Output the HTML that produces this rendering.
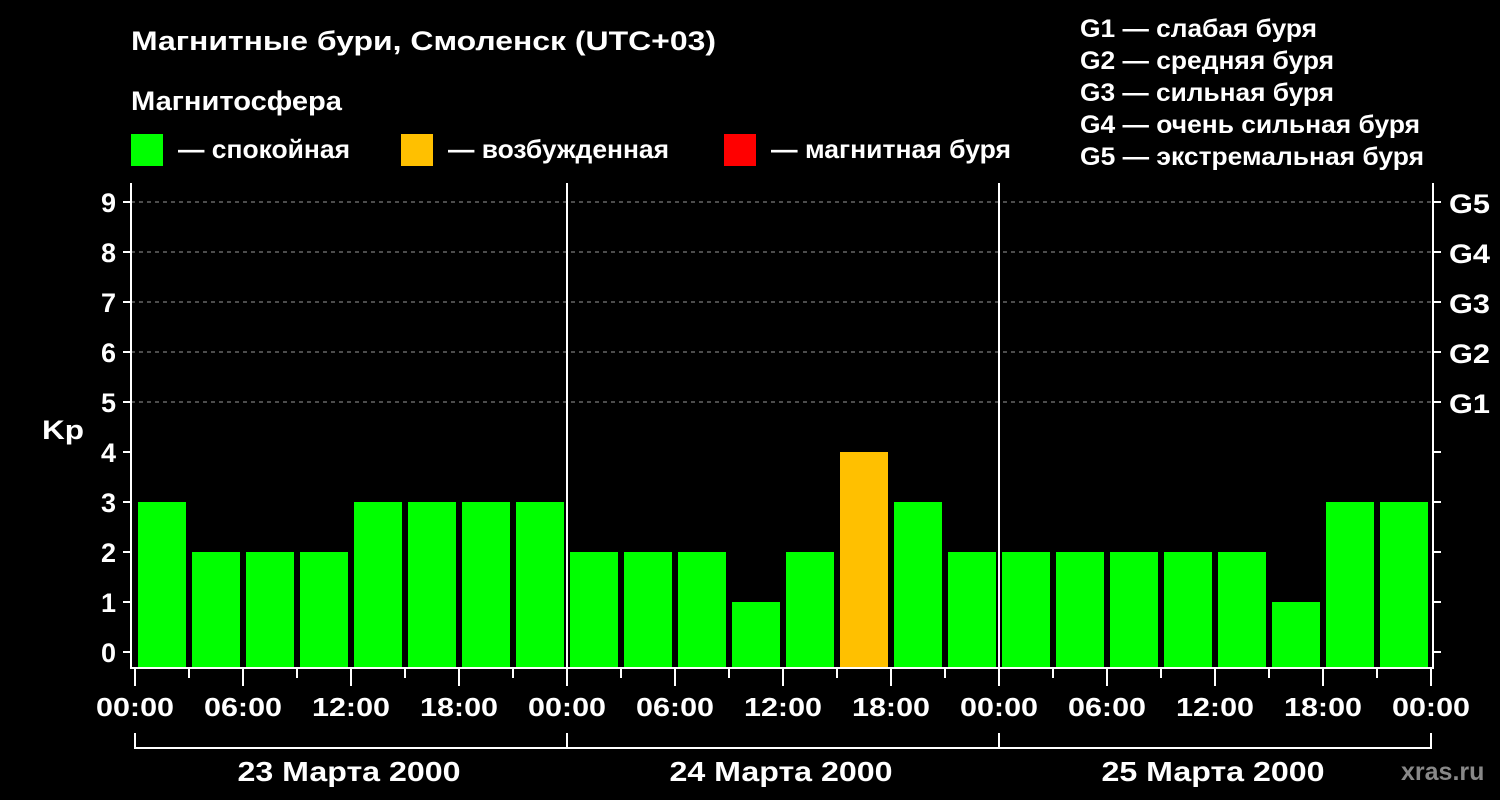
<!DOCTYPE html><html><head><style>body{margin:0;background:#000}svg{display:block}text{font-family:"Liberation Sans",sans-serif;font-weight:bold;fill:#fff}</style></head><body>
<svg width="1500" height="800" xmlns="http://www.w3.org/2000/svg">
<rect width="1500" height="800" fill="#000"/>
<text x="131" y="50" font-size="27" textLength="585" lengthAdjust="spacingAndGlyphs">Магнитные бури, Смоленск (UTC+03)</text>
<text x="131" y="110" font-size="27" textLength="211" lengthAdjust="spacingAndGlyphs">Магнитосфера</text>
<rect x="131" y="134" width="32" height="32" fill="#00ff00"/><text x="178" y="158" font-size="26" textLength="172" lengthAdjust="spacingAndGlyphs">— спокойная</text>
<rect x="401" y="134" width="32" height="32" fill="#ffc000"/><text x="448" y="158" font-size="26" textLength="221" lengthAdjust="spacingAndGlyphs">— возбужденная</text>
<rect x="724" y="134" width="32" height="32" fill="#ff0000"/><text x="771" y="158" font-size="26" textLength="240" lengthAdjust="spacingAndGlyphs">— магнитная буря</text>
<g font-size="25"><text x="1080" y="37" textLength="237" lengthAdjust="spacingAndGlyphs">G1 — слабая буря</text><text x="1080" y="69" textLength="254" lengthAdjust="spacingAndGlyphs">G2 — средняя буря</text><text x="1080" y="101" textLength="254" lengthAdjust="spacingAndGlyphs">G3 — сильная буря</text><text x="1080" y="133" textLength="340" lengthAdjust="spacingAndGlyphs">G4 — очень сильная буря</text><text x="1080" y="165" textLength="344" lengthAdjust="spacingAndGlyphs">G5 — экстремальная буря</text></g>
<g stroke="#999" stroke-width="1" stroke-dasharray="4,4">
<line x1="131" y1="202" x2="1433" y2="202"/><line x1="131" y1="252" x2="1433" y2="252"/><line x1="131" y1="302" x2="1433" y2="302"/><line x1="131" y1="352" x2="1433" y2="352"/><line x1="131" y1="402" x2="1433" y2="402"/></g>
<g fill="#00ff00">
<rect x="138" y="502" width="48" height="166"/><rect x="192" y="552" width="48" height="116"/><rect x="246" y="552" width="48" height="116"/><rect x="300" y="552" width="48" height="116"/><rect x="354" y="502" width="48" height="166"/><rect x="408" y="502" width="48" height="166"/><rect x="462" y="502" width="48" height="166"/><rect x="516" y="502" width="48" height="166"/>
<rect x="570" y="552" width="48" height="116"/><rect x="624" y="552" width="48" height="116"/><rect x="678" y="552" width="48" height="116"/><rect x="732" y="602" width="48" height="66"/><rect x="786" y="552" width="48" height="116"/><rect x="840" y="452" width="48" height="216" fill="#ffc000"/><rect x="894" y="502" width="48" height="166"/><rect x="948" y="552" width="48" height="116"/>
<rect x="1002" y="552" width="48" height="116"/><rect x="1056" y="552" width="48" height="116"/><rect x="1110" y="552" width="48" height="116"/><rect x="1164" y="552" width="48" height="116"/><rect x="1218" y="552" width="48" height="116"/><rect x="1272" y="602" width="48" height="66"/><rect x="1326" y="502" width="48" height="166"/><rect x="1380" y="502" width="48" height="166"/>
</g>
<g stroke="#fff" stroke-width="2" fill="none">
<polyline points="131,183 131,668 1433,668 1433,183"/>
<line x1="567" y1="183" x2="567" y2="668"/><line x1="999" y1="183" x2="999" y2="668"/>
<path d="M123 202h8M123 252h8M123 302h8M123 352h8M123 402h8M123 452h8M123 502h8M123 552h8M123 602h8M123 652h8"/>
<path d="M1433 202h8M1433 252h8M1433 302h8M1433 352h8M1433 402h8M1433 452h8M1433 502h8M1433 552h8M1433 602h8M1433 652h8"/>
<path d="M135 668v18M243 668v18M351 668v18M459 668v18M567 668v18M675 668v18M783 668v18M891 668v18M999 668v18M1107 668v18M1215 668v18M1323 668v18M1431 668v18"/>
<path d="M189 668v10M297 668v10M405 668v10M513 668v10M621 668v10M729 668v10M837 668v10M945 668v10M1053 668v10M1161 668v10M1269 668v10M1377 668v10"/>
<path d="M135 733v15h1296v-15M567 733v15M999 733v15"/>
</g>
<g font-size="27" text-anchor="end"><text x="116" y="212">9</text><text x="116" y="262">8</text><text x="116" y="312">7</text><text x="116" y="362">6</text><text x="116" y="412">5</text><text x="116" y="462">4</text><text x="116" y="512">3</text><text x="116" y="562">2</text><text x="116" y="612">1</text><text x="116" y="662">0</text></g>
<text x="42" y="439" font-size="27" textLength="42" lengthAdjust="spacingAndGlyphs">Kp</text>
<g font-size="27"><text x="1449" y="213" textLength="41" lengthAdjust="spacingAndGlyphs">G5</text><text x="1449" y="263" textLength="41" lengthAdjust="spacingAndGlyphs">G4</text><text x="1449" y="313" textLength="41" lengthAdjust="spacingAndGlyphs">G3</text><text x="1449" y="363" textLength="41" lengthAdjust="spacingAndGlyphs">G2</text><text x="1449" y="413" textLength="41" lengthAdjust="spacingAndGlyphs">G1</text></g>
<g font-size="26" text-anchor="middle"><text x="135" y="716" textLength="78" lengthAdjust="spacingAndGlyphs">00:00</text><text x="243" y="716" textLength="78" lengthAdjust="spacingAndGlyphs">06:00</text><text x="351" y="716" textLength="78" lengthAdjust="spacingAndGlyphs">12:00</text><text x="459" y="716" textLength="78" lengthAdjust="spacingAndGlyphs">18:00</text><text x="567" y="716" textLength="78" lengthAdjust="spacingAndGlyphs">00:00</text><text x="675" y="716" textLength="78" lengthAdjust="spacingAndGlyphs">06:00</text><text x="783" y="716" textLength="78" lengthAdjust="spacingAndGlyphs">12:00</text><text x="891" y="716" textLength="78" lengthAdjust="spacingAndGlyphs">18:00</text><text x="999" y="716" textLength="78" lengthAdjust="spacingAndGlyphs">00:00</text><text x="1107" y="716" textLength="78" lengthAdjust="spacingAndGlyphs">06:00</text><text x="1215" y="716" textLength="78" lengthAdjust="spacingAndGlyphs">12:00</text><text x="1323" y="716" textLength="78" lengthAdjust="spacingAndGlyphs">18:00</text><text x="1431" y="716" textLength="78" lengthAdjust="spacingAndGlyphs">00:00</text>
<text x="349" y="781" font-size="28" textLength="223" lengthAdjust="spacingAndGlyphs">23 Марта 2000</text><text x="781" y="781" font-size="28" textLength="223" lengthAdjust="spacingAndGlyphs">24 Марта 2000</text><text x="1213" y="781" font-size="28" textLength="223" lengthAdjust="spacingAndGlyphs">25 Марта 2000</text></g>
<text x="1401" y="780" font-size="25" style="fill:#888">xras.ru</text>
</svg></body></html>
